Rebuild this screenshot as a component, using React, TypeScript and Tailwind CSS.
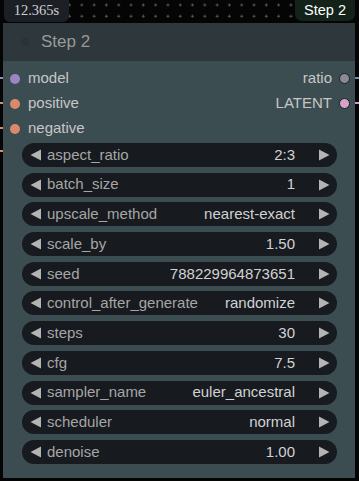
import React from 'react';

const widgets = [
  { name: 'aspect_ratio', value: '2:3' },
  { name: 'batch_size', value: '1' },
  { name: 'upscale_method', value: 'nearest-exact' },
  { name: 'scale_by', value: '1.50' },
  { name: 'seed', value: '788229964873651' },
  { name: 'control_after_generate', value: 'randomize' },
  { name: 'steps', value: '30' },
  { name: 'cfg', value: '7.5' },
  { name: 'sampler_name', value: 'euler_ancestral' },
  { name: 'scheduler', value: 'normal' },
  { name: 'denoise', value: '1.00' },
];

const inputs = [
  { name: 'model', color: 'bg-[#9b85c2]' },
  { name: 'positive', color: 'bg-[#da8a6c]' },
  { name: 'negative', color: 'bg-[#da8a6c]' },
];

const outputs = [
  { name: 'ratio', color: 'bg-[#8a8a96]' },
  { name: 'LATENT', color: 'bg-[#d3a3cb]' },
];

function Arrow({ dir }: { dir: 'left' | 'right' }) {
  return (
    <svg width="12" height="12" viewBox="0 0 12 12" className="shrink-0">
      {dir === 'left' ? (
        <polygon points="11,0.5 11,11.5 0.5,6" fill="#b4b4b4" />
      ) : (
        <polygon points="1,0.5 1,11.5 11.5,6" fill="#b4b4b4" />
      )}
    </svg>
  );
}

function Widget({ name, value }: { name: string; value: string }) {
  return (
    <div className="flex h-6 items-center rounded-full bg-[#171a1f] pl-2 pr-[7px] text-[15px]">
      <Arrow dir="left" />
      <span className="ml-[5px] text-[#a6a6a6]">{name}</span>
      <span className="ml-auto mr-[23px] text-[#d2d2d2]">{value}</span>
      <Arrow dir="right" />
    </div>
  );
}

export default function App() {
  return (
    <div
      className="relative h-[481px] w-[359px] overflow-hidden bg-[#050505]"
      style={{ fontFamily: '"Liberation Sans", Arial, sans-serif' }}
    >
      <svg className="absolute inset-0" width="359" height="481">
        <defs>
          <pattern id="grid" width="12.3" height="11.2" patternUnits="userSpaceOnUse" x="2" y="-1">
            <path d="M6 4.5 V7.5 M4.5 6 H7.5" stroke="#5a5a5a" strokeWidth="1" />
          </pattern>
        </defs>
        <rect width="359" height="481" fill="url(#grid)" />
      </svg>

      {/* wire stubs */}
      <div className="absolute left-0 top-[77px] h-[2px] w-[4px] bg-[#9b85c2]" />
      <div className="absolute left-0 top-[102px] h-[2px] w-[4px] bg-[#da8a6c]" />
      <div className="absolute left-0 top-[127px] h-[2px] w-[4px] bg-[#da8a6c]" />
      <div className="absolute left-0 top-[150px] h-[2px] w-[4px] bg-[#da8a6c]" />
      <div className="absolute right-0 top-[77px] h-[2px] w-[5px] bg-[#6f93a8]" />
      <div className="absolute right-0 top-[102px] h-[2px] w-[5px] bg-[#c99cc2]" />

      <div className="relative flex h-[23px] items-start justify-between pl-[4px] pr-[4px]">
        <div
          className="flex h-[22px] w-[65px] items-center justify-center rounded-b-[6px] bg-[#1c2026] text-[14.5px] text-[#cfcfcf]"
          style={{ fontFamily: '"Liberation Serif", "Times New Roman", serif' }}
        >
          12.365s
        </div>
        <div className="flex h-[21px] w-[60px] items-center justify-center rounded-b-[7px] bg-[#13231a] text-[14.5px] text-white">
          Step 2
        </div>
      </div>

      <div className="relative ml-[3px] w-[352px]">
        <div className="flex h-[38px] items-center bg-[#2d373c] pl-[18px]">
          <div className="h-[8px] w-[8px] rounded-full bg-[#2a3338]" />
          <span className="ml-[12px] text-[17px] text-[#999999]">Step 2</span>
        </div>

        <div className="h-[417px] bg-[#3c4d52] pt-[5px]">
          <div className="flex justify-between">
            <div className="flex flex-col">
              {inputs.map((s) => (
                <div key={s.name} className="flex h-[25px] items-center pl-[7px]">
                  <div className={`h-[10px] w-[10px] rounded-full ${s.color}`} />
                  <span className="ml-[8px] text-[15px] text-[#c6c6c6]">{s.name}</span>
                </div>
              ))}
            </div>
            <div className="flex flex-col items-end">
              {outputs.map((s) => (
                <div key={s.name} className="flex h-[25px] items-center pr-[5px]">
                  <span className="mr-[7px] text-[15px] text-[#c6c6c6]">{s.name}</span>
                  <div className={`h-[11px] w-[11px] rounded-full border border-[#1b1f22] ${s.color}`} />
                </div>
              ))}
            </div>
          </div>

          <div className="ml-[19px] mt-[2px] flex w-[315px] flex-col gap-[5.7px]">
            {widgets.map((w) => (
              <Widget key={w.name} name={w.name} value={w.value} />
            ))}
          </div>
        </div>
      </div>
    </div>
  );
}
